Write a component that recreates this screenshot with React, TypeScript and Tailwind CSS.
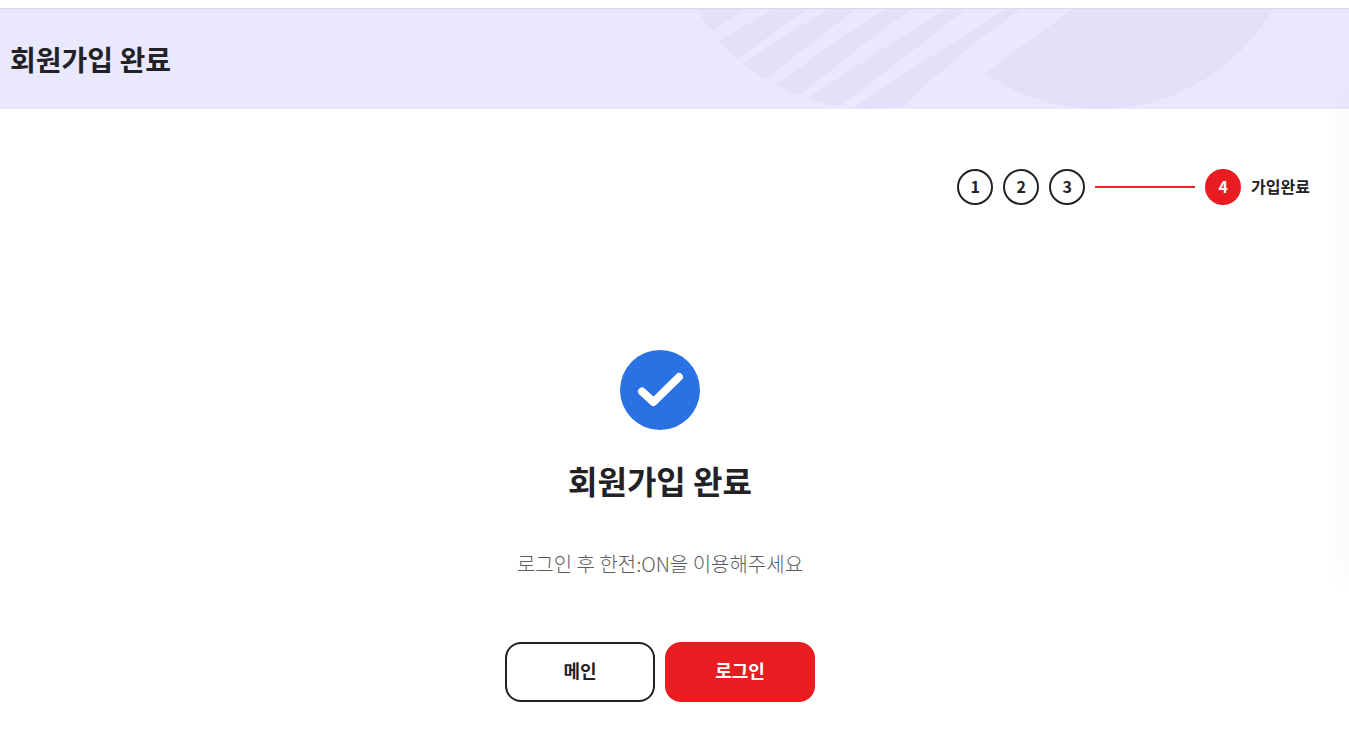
const FONT =
  "font-['Noto_Sans_CJK_KR','Noto_Sans_KR',sans-serif]";

function BannerPattern() {
  return (
    <svg
      className="absolute bottom-0 left-[690px] h-[100px] w-[600px]"
      viewBox="690 9 600 100"
      fill="#e3e1f8"
      aria-hidden="true"
    >
      <defs>
        <clipPath id="disc">
          <circle cx="870" cy="-91" r="200" />
        </clipPath>
      </defs>
      <g clipPath="url(#disc)">
        <path d="M690 9H746L708 34Z" />
        <path d="M773 9H807L736 60L716 43Z" />
        <path d="M828 9H855L764 81L741 64Z" />
        <path d="M886 9H912L873 37L797 97L773 87L840 38Z" />
        <path d="M947 9H965L920 45L837 109L799 104L840 77L890 44Z" />
      </g>
      <path d="M1006 9H1021L973 44L927 84L902 107Q880 109 852 109L907 72L965 35Z" />
      <path d="M985 73L1073 9H1273A200 200 0 0 1 985 73Z" />
    </svg>
  );
}

function Step({ n, active = false }: { n: number; active?: boolean }) {
  return (
    <span
      className={
        active
          ? "flex size-9 items-center justify-center rounded-full bg-[#e91c21] pb-0.5 text-base font-bold text-white"
          : "flex size-9 items-center justify-center rounded-full border-2 border-[#222226] pb-0.5 text-base font-bold"
      }
    >
      {n}
    </span>
  );
}

export default function App() {
  return (
    <div className={`${FONT} relative min-h-screen overflow-hidden bg-white text-[#222226]`}>
      <header className="relative mt-2 overflow-hidden border-t border-[#d9d8e6] bg-[#e9e8fd]">
        <BannerPattern />
        <div className="relative flex h-[100px] max-w-[1320px] items-center px-[10px]">
          <h1 className="text-[28px] leading-10 font-bold">회원가입 완료</h1>
        </div>
      </header>

      <main className="max-w-[1320px] px-[10px] pt-[60px] pb-8">
        <ol className="flex items-center justify-end gap-[10px]">
          <li><Step n={1} /></li>
          <li><Step n={2} /></li>
          <li><Step n={3} /></li>
          <li className="h-[2px] w-[100px] bg-[#e12a26]" aria-hidden="true" />
          <li className="flex items-center gap-[10px]" aria-current="step">
            <Step n={4} active />
            <span className="pb-0.5 text-base font-bold">가입완료</span>
          </li>
        </ol>

        <section className="mt-[145px] flex flex-col items-center text-center">
          <svg className="size-20" viewBox="0 0 80 80" fill="none" aria-hidden="true">
            <circle cx="40" cy="40" r="40" fill="#2a71e3" />
            <path
              d="M22 41.5L33.5 52L59 27"
              stroke="#fff"
              strokeWidth="8"
              strokeLinecap="round"
              strokeLinejoin="round"
            />
          </svg>
          <h2 className="mt-[26px] text-[32px] leading-12 font-bold">회원가입 완료</h2>
          <p className="mt-[46px] text-xl leading-7 font-light text-[#5c5c60]">
            로그인 후 한전:ON을 이용해주세요
          </p>
          <div className="mt-16 flex gap-[10px]">
            <button
              type="button"
              className="h-[60px] w-[150px] rounded-2xl border-2 border-[#222226] bg-white pb-1 text-lg font-bold"
            >
              메인
            </button>
            <button
              type="button"
              className="h-[60px] w-[150px] rounded-2xl bg-[#e91c21] pb-1 text-lg font-bold text-white"
            >
              로그인
            </button>
          </div>
        </section>
      </main>

      <div
        className="pointer-events-none absolute top-[90px] -right-5 h-[490px] w-5 shadow-[0_0_30px_rgba(0,0,0,0.05)]"
        aria-hidden="true"
      />
    </div>
  );
}
